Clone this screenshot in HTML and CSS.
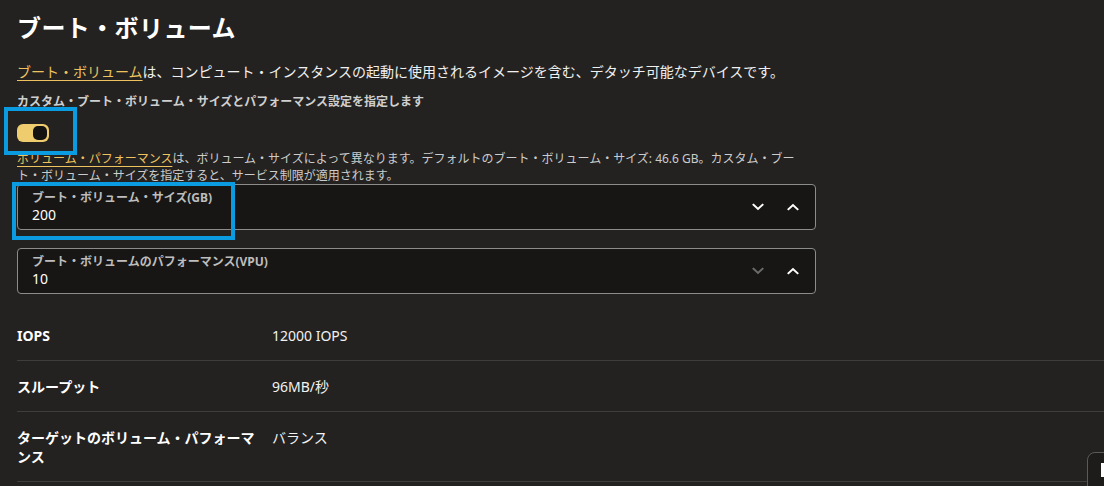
FILE: index.html
```html
<!DOCTYPE html>
<html lang="ja">
<head>
<meta charset="utf-8">
<link rel="stylesheet" href="styles.css">
</head>
<body>
<main class="page">
  <h1 class="title">ブート・ボリューム</h1>
  <p class="desc"><a class="link" href="#">ブート・ボリューム</a>は、コンピュート・インスタンスの起動に使用されるイメージを含む、デタッチ可能なデバイスです。</p>
  <p class="subhead">カスタム・ブート・ボリューム・サイズとパフォーマンス設定を指定します</p>
  <div class="toggle-wrap">
    <span class="toggle"><span class="knob"></span></span>
    <span class="hl hl-toggle"></span>
  </div>
  <p class="note"><a class="link" href="#">ボリューム・パフォーマンス</a>は、ボリューム・サイズによって異なります。デフォルトのブート・ボリューム・サイズ: 46.6 GB。カスタム・ブート・ボリューム・サイズを指定すると、サービス制限が適用されます。</p>

  <div class="field">
    <div class="field-text">
      <div class="field-label">ブート・ボリューム・サイズ(GB)</div>
      <div class="field-value">200</div>
    </div>
    <div class="steppers">
      <svg class="chev" viewBox="0 0 12 8" width="12" height="8"><path d="M1.5 1.8 L6 6 L10.5 1.8" /></svg>
      <svg class="chev" viewBox="0 0 12 8" width="12" height="8"><path d="M1.5 6.2 L6 2 L10.5 6.2" /></svg>
    </div>
    <span class="hl hl-field"></span>
  </div>

  <div class="field field-2">
    <div class="field-text">
      <div class="field-label">ブート・ボリュームのパフォーマンス(VPU)</div>
      <div class="field-value">10</div>
    </div>
    <div class="steppers">
      <svg class="chev chev-off" viewBox="0 0 12 8" width="12" height="8"><path d="M1.5 1.8 L6 6 L10.5 1.8" /></svg>
      <svg class="chev" viewBox="0 0 12 8" width="12" height="8"><path d="M1.5 6.2 L6 2 L10.5 6.2" /></svg>
    </div>
  </div>

  <dl class="specs">
    <div class="spec-row">
      <dt>IOPS</dt>
      <dd>12000 IOPS</dd>
    </div>
    <div class="spec-row">
      <dt>スループット</dt>
      <dd>96MB/秒</dd>
    </div>
    <div class="spec-row">
      <dt>ターゲットのボリューム・パフォーマンス</dt>
      <dd>バランス</dd>
    </div>
  </dl>
</main>
<div class="corner-tab"><span class="corner-mark"></span></div>
</body>
</html>
```

FILE: styles.css
```css
* { box-sizing: border-box; }

html, body {
  margin: 0;
  padding: 0;
  background: #232221;
  color: #f2f2f2;
  font-family: "Noto Sans", "Noto Sans CJK JP", sans-serif;
  overflow: hidden;
  height: 100%;
}

.page {
  padding: 12px 0 0 17px;
}

.title {
  margin: 0;
  font-size: 24px;
  line-height: 32px;
  font-weight: 700;
  color: #ffffff;
  letter-spacing: 0.4px;
}

.desc {
  margin: 18px 0 0 0;
  font-size: 14px;
  line-height: 20px;
  color: #f0f0f0;
}

.link {
  color: #eec25f;
  text-decoration: underline;
  text-underline-offset: 3px;
}

.subhead {
  margin: 11px 0 0 0;
  font-size: 12px;
  line-height: 18px;
  font-weight: 700;
  color: #cfcfcf;
}

.toggle-wrap {
  position: relative;
  margin-top: 13px;
  width: 32px;
  height: 18px;
}

.toggle {
  display: flex;
  justify-content: flex-end;
  align-items: center;
  width: 32px;
  height: 18px;
  padding: 0 2px;
  border-radius: 6px;
  background: #efcc6d;
}

.knob {
  width: 14px;
  height: 14px;
  border-radius: 5px;
  background: #141312;
}

.hl {
  position: absolute;
  border: 4px solid #0b9be0;
  pointer-events: none;
}

.hl-toggle {
  left: -13px;
  top: -17px;
  width: 73px;
  height: 48px;
}

.note {
  margin: 8px 0 0 0;
  max-width: 790px;
  font-size: 12px;
  line-height: 17px;
  color: #cccccc;
}

.field {
  position: relative;
  display: flex;
  align-items: center;
  justify-content: space-between;
  width: 799px;
  height: 46px;
  margin-top: 0;
  padding: 4px 16px 5px 14px;
  background: #171615;
  border: 1px solid #8c8c8c;
  border-radius: 4px;
}

.field-2 {
  margin-top: 18px;
}

.field-text {
  display: flex;
  flex-direction: column;
}

.field-label {
  font-size: 12px;
  line-height: 16px;
  font-weight: 700;
  color: #bdbdbd;
}

.field-value {
  font-size: 14px;
  line-height: 18px;
  color: #ffffff;
}

.steppers {
  display: flex;
  align-items: center;
  gap: 23px;
}

.chev {
  display: block;
  fill: none;
  stroke: #ffffff;
  stroke-width: 2;
  stroke-linecap: square;
}

.chev-off {
  stroke: #6b6b6b;
}

.hl-field {
  left: -6px;
  top: -3px;
  width: 223px;
  height: 58px;
}

.specs {
  margin: 16px 0 0 0;
  padding: 0;
}

.spec-row {
  display: grid;
  grid-template-columns: 245px 1fr;
  column-gap: 10px;
  padding: 16px 0 15px 0;
  border-bottom: 1px solid #3f3e3d;
}

.spec-row dt {
  margin: 0;
  font-size: 14px;
  line-height: 19px;
  font-weight: 700;
  color: #ffffff;
}

.spec-row dd {
  margin: 0;
  font-size: 14px;
  line-height: 19px;
  color: #f2f2f2;
}

.corner-tab {
  position: fixed;
  left: 1087px;
  top: 452px;
  width: 40px;
  height: 60px;
  background: #1d1c1b;
  border: 1px solid #5a5a5a;
  border-radius: 8px 0 0 0;
}

.corner-mark {
  position: absolute;
  left: 13px;
  top: 10px;
  width: 4px;
  height: 14px;
  background: #ffffff;
}
```
